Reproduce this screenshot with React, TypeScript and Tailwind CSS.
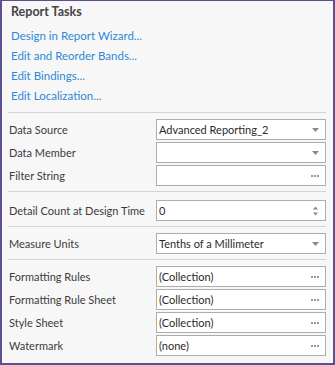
import React from 'react';

const font = { fontFamily: 'Lato, "Segoe UI", "Noto Sans", sans-serif' };

function DropArrow() {
  return (
    <svg width="7" height="4" viewBox="0 0 7 4" className="shrink-0">
      <path d="M0 0h7L3.5 4z" fill="#8a8a8a" />
    </svg>
  );
}

function Dots() {
  return (
    <svg width="8" height="2" viewBox="0 0 8 2" className="shrink-0">
      <rect x="0" y="0" width="2" height="2" fill="#9a9a9a" />
      <rect x="3" y="0" width="2" height="2" fill="#9a9a9a" />
      <rect x="6" y="0" width="2" height="2" fill="#9a9a9a" />
    </svg>
  );
}

function Spin() {
  return (
    <svg width="7" height="10" viewBox="0 0 7 10" className="shrink-0">
      <path d="M1 3.5h5L3.5 0.5z" fill="#8a8a8a" />
      <path d="M1 6.5h5L3.5 9.5z" fill="#8a8a8a" />
    </svg>
  );
}

type Kind = 'drop' | 'dots' | 'spin';

function Row({ label, value, kind }: { label: string; value: string; kind: Kind }) {
  return (
    <div className="flex items-center h-[21px]">
      <div className="w-[148px] shrink-0 text-[#3c3c3c] whitespace-nowrap pl-[1px]">{label}</div>
      <div className="flex-1 h-[21px] bg-white border border-[#adadad] flex items-center pl-[2px] pr-[6px]">
        <span className="flex-1 text-[#2a2a2a] truncate">{value}</span>
        {kind === 'drop' && <DropArrow />}
        {kind === 'dots' && <Dots />}
        {kind === 'spin' && <Spin />}
      </div>
    </div>
  );
}

function Sep() {
  return <div className="h-px bg-[#d4d4d4]" />;
}

export default function App() {
  return (
    <div
      className="w-[335px] h-[365px] bg-[#f7f7f7] border-[#5e4f93] border-t border-l-2 border-r-2 border-b-2 text-[11px] leading-[16px]"
      style={font}
    >
      <div className="pl-[9px] pr-[8px] pt-[1px]">
        <div className="font-bold text-[12.5px] text-[#444] h-[20px] flex items-center">Report Tasks</div>
        <div className="flex flex-col text-[#2f87d5] text-[11.5px] mt-[4px]">
          <div className="h-[20px] flex items-center">Design in Report Wizard...</div>
          <div className="h-[20px] flex items-center">Edit and Reorder Bands...</div>
          <div className="h-[20px] flex items-center">Edit Bindings...</div>
          <div className="h-[20px] flex items-center">Edit Localization...</div>
        </div>
      </div>

      <div className="pl-[6px] pr-[7px] mt-[6px]">
        <Sep />
        <div className="flex flex-col gap-[2px] pt-[6px] pb-[5px]">
          <Row label="Data Source" value="Advanced Reporting_2" kind="drop" />
          <Row label="Data Member" value="" kind="drop" />
          <Row label="Filter String" value="" kind="dots" />
        </div>
        <Sep />
        <div className="pt-[8px] pb-[5px]">
          <Row label="Detail Count at Design Time" value="0" kind="spin" />
        </div>
        <Sep />
        <div className="pt-[6px] pb-[5px]">
          <Row label="Measure Units" value="Tenths of a Millimeter" kind="drop" />
        </div>
        <Sep />
        <div className="flex flex-col gap-[2px] pt-[6px]">
          <Row label="Formatting Rules" value="(Collection)" kind="dots" />
          <Row label="Formatting Rule Sheet" value="(Collection)" kind="dots" />
          <Row label="Style Sheet" value="(Collection)" kind="dots" />
          <Row label="Watermark" value="(none)" kind="dots" />
        </div>
      </div>
    </div>
  );
}
